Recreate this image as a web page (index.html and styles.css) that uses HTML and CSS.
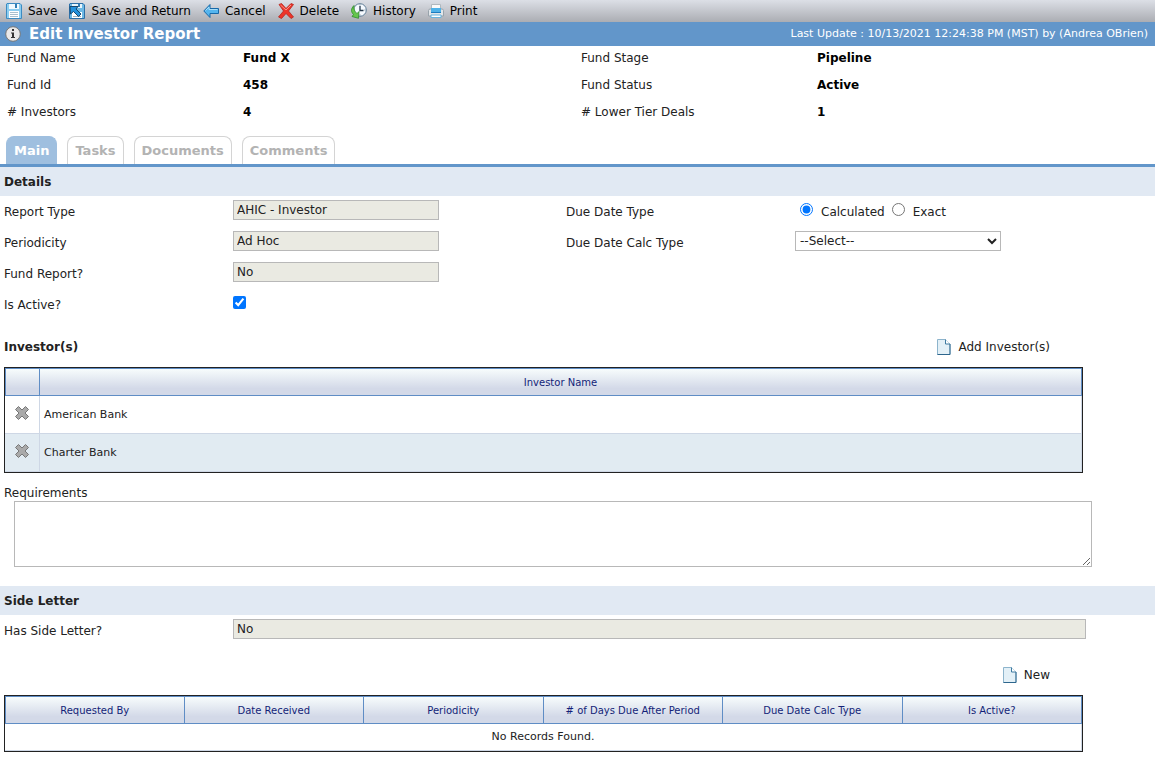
FILE: index.html
```html
<!DOCTYPE html>
<html lang="en">
<head>
    <meta charset="UTF-8">
    <meta name="viewport" content="width=device-width, initial-scale=1.0">
    <title>Edit Investor Report</title>
    <link rel="stylesheet" href="styles.css">
</head>
<body>
    <div class="toolbar">
        <button type="button">
            <svg width="16" height="16" viewBox="0 0 16 16"><path d="M1 .5h13l1.500 1.500v13.500H.5V1z" fill="#8ccdf0" stroke="#3c8bc2"/><path d="M3 1h10v5H3z" fill="#f2fafe"/><path d="M9 1h2v4H9z" fill="#347fb5"/><path d="M3 8h10v7H3z" fill="#fff"/><path d="M4 9.500h8M4 11.500h8M4 13.500h8" stroke="#a9bfcd"/></svg>
            <span>Save</span>
        </button>
        <button type="button">
            <svg width="16" height="16" viewBox="0 0 16 16"><path d="M1 .5h13l1.500 1.500v13.500H.5V1z" fill="#6db9e5" stroke="#2c6fa8"/><path d="M3 1h10v4H3z" fill="#e8f5fc"/><path d="M9 1h2v3H9z" fill="#347fb5"/><path d="M3 9h10v6H3z" fill="#fff"/><path d="M4 13.500h8" stroke="#9ab4c4"/><path d="M1 3.500h8L7 6l5 5-2.500 2.500-5-5L1.500 11z" fill="#2391dc" stroke="#17476f"/></svg>
            <span>Save and Return</span>
        </button>
        <button type="button">
            <svg width="16" height="16" viewBox="0 0 16 16"><path d="M.8 8L7 1.500v4h8.500v5H7v4z" fill="#55b5ee" stroke="#1768a8"/><path d="M2.500 7.500L6 4v2.500h8.500" fill="none" stroke="#a8def8"/></svg>
            <span>Cancel</span>
        </button>
        <button type="button">
            <svg width="16" height="16" viewBox="0 0 16 16"><path d="M1 1.500L3.500.5 8 5.500 13 .5l2.500 1L10.500 8l5 6-2.500 1.500-5-5-4.500 5L.5 14l5-6z" fill="#ee3428" stroke="#b32620" stroke-width=".8"/><path d="M2.500 2L8 7l5-5" fill="none" stroke="#fa9185"/></svg>
            <span>Delete</span>
        </button>
        <button type="button">
            <svg width="16" height="16" viewBox="0 0 16 16"><circle cx="9" cy="7" r="6.300" fill="#f5faff" stroke="#5f7d96"/><path d="M9 3v4.500h3.500" fill="none" stroke="#24384a" stroke-width="1.300"/><path d="M9 1.500v1M14.500 7h-1M9 12.500v-1" stroke="#6c8292"/><path d="M3 2.500C-.5 6 0 9 2.500 11.500L1 13.500l6.500 1.800.5-6.800-2 2C3.500 8.500 2.500 6 3 2.500z" fill="#66c64c" stroke="#2d8b2b" stroke-width=".8"/></svg>
            <span>History</span>
        </button>
        <button type="button">
            <svg width="16" height="16" viewBox="0 0 16 16"><path d="M3.500 1.500h9V7h-9z" fill="#fafafa" stroke="#b0b8be"/><path d="M1.500 6h13l1 1.500V13H.5V7.500z" fill="#e2e6e9" stroke="#98a3ab"/><path d="M3 5h10v5H3z" fill="#4fb2e8"/><path d="M3 9.500h10" stroke="#1d7cbf"/><path d="M3 12h10v2.500H3z" fill="#fff" stroke="#68b4de"/></svg>
            <span>Print</span>
        </button>
    </div>
    <div class="title-bar">
        <svg width="16" height="16" viewBox="0 0 16 16"><circle cx="8" cy="8" r="7.300" fill="#e9e9e9" stroke="#777"/><path d="M7 3h2v2H7zM6 6.500h3V11h1v1H6v-1h1V7.500H6z" fill="#333"/></svg>
        <h1>Edit Investor Report</h1>
        <span class="last-update">Last Update : 10/13/2021 12:24:38 PM (MST) by (Andrea OBrien)</span>
    </div>

    <dl class="summary">
        <dt>Fund Name</dt><dd>Fund X</dd>
        <dt>Fund Stage</dt><dd>Pipeline</dd>
        <dt>Fund Id</dt><dd>458</dd>
        <dt>Fund Status</dt><dd>Active</dd>
        <dt># Investors</dt><dd>4</dd>
        <dt># Lower Tier Deals</dt><dd>1</dd>
    </dl>

    <div class="tabs">
        <button type="button" class="tab active">Main</button>
        <button type="button" class="tab">Tasks</button>
        <button type="button" class="tab">Documents</button>
        <button type="button" class="tab">Comments</button>
    </div>

    <form>
        <h2 class="section">Details</h2>
        <div class="fields">
            <label for="reportType">Report Type</label>
            <div><input type="text" id="reportType" value="AHIC - Investor" readonly></div>
            <span id="dueDateType">Due Date Type</span>
            <div class="radios" role="radiogroup" aria-labelledby="dueDateType">
                <input type="radio" name="dueType" id="calculated" checked><label for="calculated">Calculated</label>
                <input type="radio" name="dueType" id="exact"><label for="exact">Exact</label>
            </div>
            <label for="periodicity">Periodicity</label>
            <div><input type="text" id="periodicity" value="Ad Hoc" readonly></div>
            <label for="calcType">Due Date Calc Type</label>
            <div><select id="calcType"><option>--Select--</option></select></div>
            <label for="fundReport">Fund Report?</label>
            <div class="wide"><input type="text" id="fundReport" value="No" readonly></div>
            <label for="isActive">Is Active?</label>
            <div class="wide"><input type="checkbox" id="isActive" checked></div>
        </div>

        <div class="list-head">
            <h3>Investor(s)</h3>
            <button type="button">
                <svg width="14" height="16" viewBox="0 0 14 16"><path d="M.5.500h8l4.500 4.500v10.500H.5z" fill="#e3f0f7" stroke="#8db4cc"/><path d="M.5 15.500h12.500V5" fill="none" stroke="#2d668d"/><path d="M8.500.500v4.500H13" fill="#fff" stroke="#3f7ba1"/></svg>
                <span>Add Investor(s)</span>
            </button>
        </div>
        <table class="grid investors">
            <thead>
                <tr><th class="remove"></th><th>Investor Name</th></tr>
            </thead>
            <tbody>
                <tr>
                    <td class="remove"><button type="button" aria-label="Remove American Bank"><svg width="14" height="14" viewBox="0 0 14 14"><path d="M3.500.500L7 4 10.500.500l3 3L10 7l3.500 3.500-3 3L7 10l-3.500 3.500-3-3L4 7 .5 3.500z" fill="#aaa" stroke="#777"/></svg></button></td>
                    <td>American Bank</td>
                </tr>
                <tr>
                    <td class="remove"><button type="button" aria-label="Remove Charter Bank"><svg width="14" height="14" viewBox="0 0 14 14"><path d="M3.500.500L7 4 10.500.500l3 3L10 7l3.500 3.500-3 3L7 10l-3.500 3.500-3-3L4 7 .5 3.500z" fill="#aaa" stroke="#777"/></svg></button></td>
                    <td>Charter Bank</td>
                </tr>
            </tbody>
        </table>

        <div class="requirements">
            <label for="requirements">Requirements</label>
            <textarea id="requirements"></textarea>
        </div>

        <h2 class="section">Side Letter</h2>
        <div class="fields">
            <label for="sideLetter">Has Side Letter?</label>
            <div class="wide"><input type="text" id="sideLetter" class="full" value="No" readonly></div>
        </div>

        <div class="list-head side-head">
            <button type="button">
                <svg width="14" height="16" viewBox="0 0 14 16"><path d="M.5.500h8l4.500 4.500v10.500H.5z" fill="#e3f0f7" stroke="#8db4cc"/><path d="M.5 15.500h12.500V5" fill="none" stroke="#2d668d"/><path d="M8.500.500v4.500H13" fill="#fff" stroke="#3f7ba1"/></svg>
                <span>New</span>
            </button>
        </div>
        <table class="grid letters">
            <thead>
                <tr>
                    <th>Requested By</th>
                    <th>Date Received</th>
                    <th>Periodicity</th>
                    <th># of Days Due After Period</th>
                    <th>Due Date Calc Type</th>
                    <th>Is Active?</th>
                </tr>
            </thead>
            <tbody>
                <tr><td colspan="6">No Records Found.</td></tr>
            </tbody>
        </table>
    </form>
</body>
</html>
```
FILE: styles.css
```css
* {
    box-sizing: border-box;
}
body {
    margin: 0;
    background: #fff;
    color: #222;
    font-family: Verdana, "DejaVu Sans", sans-serif;
    font-size: 12px;
    line-height: 16px;
}
button {
    display: flex;
    align-items: center;
    padding: 0;
    border: 0;
    background: none;
    color: inherit;
    font: inherit;
    cursor: pointer;
}
svg {
    display: block;
    flex: none;
}
.toolbar {
    display: flex;
    gap: 12px;
    height: 22px;
    padding: 0 6px;
    background: linear-gradient(#dcdfe6, #abadb3);
    color: #000;
}
.toolbar button {
    gap: 6px;
}
.title-bar {
    display: flex;
    align-items: center;
    height: 24px;
    padding: 0 7px 0 5px;
    background: #6296ca;
    color: #fff;
}
.title-bar h1 {
    margin: 0 0 0 8px;
    font-size: 15px;
}
.last-update {
    margin-left: auto;
    font-size: 11px;
}
.summary {
    display: grid;
    grid-template-columns: 236px 1fr 236px 1fr;
    row-gap: 3px;
    margin: 0;
    padding: 0 0 12px 7px;
    line-height: 24px;
}
.summary dd {
    margin: 0;
    color: #000;
    font-weight: bold;
}
.tabs {
    display: flex;
    gap: 10px;
    padding: 0 6px;
    border-bottom: 3px solid #6296ca;
}
.tab {
    height: 28px;
    padding: 0 7px;
    border: 1px solid #d4d4d4;
    border-bottom: 0;
    border-radius: 8px 8px 0 0;
    color: #b3b3b3;
    font-size: 13px;
    font-weight: bold;
}
.tab.active {
    border-color: #9fbfdf;
    background: #9fbfdf;
    color: #fff;
}
.section {
    margin: 0;
    padding: 1px 4px 0;
    background: #e1e9f3;
    font-size: 12px;
    line-height: 28px;
}
.fields {
    display: grid;
    grid-template-columns: 229px 333fr 229px 360fr;
    grid-auto-rows: 31px;
    padding-left: 4px;
    line-height: 32px;
}
.fields > div {
    padding-top: 4px;
}
.fields .wide {
    grid-column: span 3;
}
input[type="text"], select {
    display: block;
    width: 206px;
    height: 20px;
    border: 1px solid #b8b8b8;
    color: #222;
    font: inherit;
    line-height: 16px;
}
input[type="text"] {
    padding: 0 3px;
    background: #eaeae2;
}
select {
    padding: 0;
    background: #fff;
}
input.full {
    width: calc(100% - 69px);
}
input[type="checkbox"] {
    display: block;
    width: 13px;
    height: 13px;
    margin: 3px 0;
}
.radios {
    display: flex;
    align-items: flex-start;
    line-height: 24px;
}
.radios input {
    width: 13px;
    height: 13px;
    margin: 3px 8px 0 5px;
}
.radios label + input {
    margin-left: 7px;
}
.list-head {
    display: flex;
    justify-content: space-between;
    align-items: center;
    height: 40px;
    margin: 7px 105px 0 4px;
}
.list-head h3 {
    margin: 0;
    font-size: 12px;
}
.list-head button {
    gap: 7px;
}
.side-head {
    justify-content: flex-end;
    margin-top: 9px;
}
.grid {
    width: calc(100% - 76px);
    margin-left: 4px;
    border: 1px solid #222;
    border-spacing: 0;
    table-layout: fixed;
    font-size: 11px;
}
.grid th {
    height: 28px;
    padding: 1px 0 0;
    border: 1px solid #5f8dc5;
    border-left-width: 0;
    background: linear-gradient(#f7fcfc, #d3d9e8 75%);
    color: #131f78;
    font-size: 10px;
    font-weight: normal;
}
.grid th:first-child {
    border-left-width: 1px;
}
.grid td {
    padding: 0 4px;
    border-right: 1px solid #ced7e5;
    border-bottom: 1px solid #ced7e5;
}
.investors .remove {
    width: 35px;
}
.investors td {
    height: 38px;
}
.investors td.remove {
    padding-bottom: 4px;
}
.investors tr:nth-child(2) td {
    background: #e1ebf2;
}
.remove button {
    margin: 0 auto;
}
.letters td {
    height: 27px;
    text-align: center;
}
.requirements {
    padding: 12px 63px 19px 4px;
}
.requirements label {
    display: block;
}
.requirements textarea {
    display: block;
    width: calc(100% - 10px);
    height: 66px;
    margin-left: 10px;
    border: 1px solid #b8b8b8;
    font: inherit;
}
```
